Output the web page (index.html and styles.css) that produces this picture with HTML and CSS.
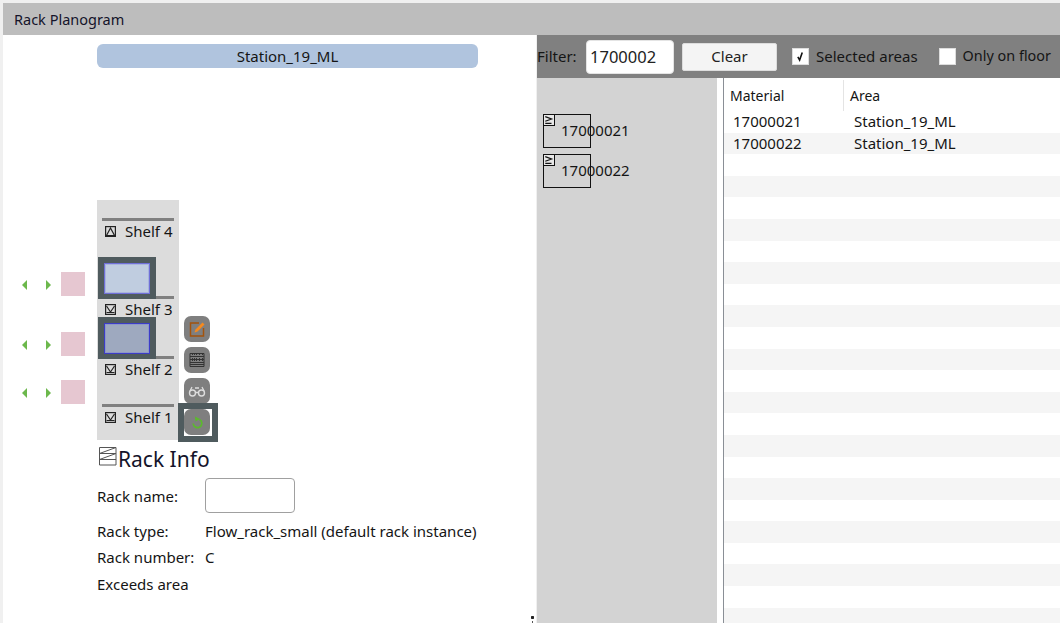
FILE: index.html
```html
<!DOCTYPE html>
<html lang="en">
<head>
<meta charset="utf-8">
<title>Rack Planogram</title>
<link rel="stylesheet" href="styles.css">
</head>
<body>
<div class="app">
  <header class="title">Rack Planogram</header>
  <div class="main">
    <section class="left">
      <div class="station">Station_19_ML</div>
      <div class="canvas">
        <div class="rack"></div>
        <div class="line l4"></div><div class="line l3"></div><div class="line l2"></div><div class="line l1"></div>
        <div class="shelf s4"><svg class="chk" viewBox="0 0 11 11"><rect x=".6" y=".6" width="9.800" height="9.800"/><path d="M1.500 9.500 5.500 2l4 7.500z"/></svg>Shelf 4</div>
        <div class="shelf s3"><svg class="chk" viewBox="0 0 11 11"><rect x=".6" y=".6" width="9.800" height="9.800"/><path d="M1.500 2 5.500 8l4-6M1.500 8.500h8"/></svg>Shelf 3</div>
        <div class="shelf s2"><svg class="chk" viewBox="0 0 11 11"><rect x=".6" y=".6" width="9.800" height="9.800"/><path d="M1.500 2 5.500 8l4-6M1.500 8.500h8"/></svg>Shelf 2</div>
        <div class="shelf s1"><svg class="chk" viewBox="0 0 11 11"><rect x=".6" y=".6" width="9.800" height="9.800"/><path d="M1.500 2 5.500 8l4-6M1.500 8.500h8"/></svg>Shelf 1</div>
        <div class="sel sel-a"><div class="bin bin-a"></div></div>
        <div class="sel sel-b"><div class="bin bin-b"></div></div>

        <div class="ctl c1"><i class="al"></i><i class="ar"></i><b class="pink"></b></div>
        <div class="ctl c2"><i class="al"></i><i class="ar"></i><b class="pink"></b></div>
        <div class="ctl c3"><i class="al"></i><i class="ar"></i><b class="pink"></b></div>

        <div class="tool t1"><svg viewBox="0 0 26 26" width="26" height="26"><path d="M15 7H6.500v13h13v-8" fill="none" stroke="#a3530c" stroke-width="1.500"/><path d="M10.500 16.500l1-3 7-7 2 2-7 7z" fill="#f58a1f"/></svg></div>
        <div class="tool t2"><svg viewBox="0 0 26 26" width="26" height="26"><path d="M6 6.500h14v13H6zM6 9.500h14M6 12.500h14M6 15.500h14M6 17.500h14" stroke="#333" fill="none"/><path d="M8.500 7v12M10.500 7v12M12.500 7v12M15.500 7v12M18.500 7v12" stroke="#333" fill="none" stroke-dasharray="1 1"/></svg></div>
        <div class="tool t3"><svg viewBox="0 0 26 26" width="26" height="26"><circle cx="8.500" cy="15" r="3" fill="none" stroke="#ddd" stroke-width="1.400"/><circle cx="17.500" cy="15" r="3" fill="none" stroke="#ddd" stroke-width="1.400"/><path d="M11.500 14.500h3M6 13l2-4M20 13l-2-4M11 10h4" stroke="#ddd" stroke-width="1.300" fill="none"/></svg></div>
        <div class="tool-sel"><div class="tool-white"><div class="tool t4"><svg viewBox="0 0 26 26" width="26" height="26"><path d="M15.500 10.500a4.300 4.300 0 1 1-6.300 4" fill="none" stroke="#5cb82e" stroke-width="1.800"/><path d="M11 7.500l5 2.500-4.500 2.500z" fill="#5cb82e"/></svg></div></div></div>
      </div>
      <div class="info">
        <h2 class="info-title"><svg class="info-ic" viewBox="0 0 18 19"><path d="M.5 .5h16.500v17.500H.5zM.5 6.500h16.500M.5 12.500h16.500M.5 6.500l16.500-6M.5 12.500l16.500-6" fill="none" stroke="#555"/></svg>Rack Info</h2>
        <div class="field f-name"><span class="lab">Rack name:</span><input class="name-in" type="text"></div>
        <div class="field f-type"><span class="lab">Rack type:</span><span>Flow_rack_small (default rack instance)</span></div>
        <div class="field f-num"><span class="lab">Rack number:</span><span>C</span></div>
        <div class="field f-ex"><span class="lab">Exceeds area</span></div>
      </div>
      <span class="grip"></span>
    </section>
    <section class="right">
      <div class="filter">
        <label class="flt">Filter:</label>
        <input class="flt-in" type="text" value="1700002">
        <button class="clear" type="button">Clear</button>
        <span class="cb on"><svg viewBox="0 0 17 17" width="15" height="15"><path d="M5.500 9l2 3.500L10.500 4" fill="none" stroke="#111" stroke-width="1.800"/></svg></span><span class="cb-l">Selected areas</span>
        <span class="cb"></span><span class="cb-l floor">Only on floor</span>
      </div>
      <div class="split">
        <div class="tree">
          <div class="node"><span class="arrow"><svg viewBox="0 0 12 10"><path d="M1.500 1 9 3.800 1.500 6.500M1.500 9H9" fill="none" stroke="#111" stroke-width="1.500"/></svg></span><span class="node-t">17000021</span></div>
          <div class="node"><span class="arrow"><svg viewBox="0 0 12 10"><path d="M1.500 1 9 3.800 1.500 6.500M1.500 9H9" fill="none" stroke="#111" stroke-width="1.500"/></svg></span><span class="node-t">17000022</span></div>
        </div>
        <div class="gutter"></div>
        <div class="table">
          <div class="thead"><div class="th th-m">Material</div><div class="th th-a">Area</div></div>
          <div class="row"><span class="td-m">17000021</span><span>Station_19_ML</span></div>
          <div class="row"><span class="td-m">17000022</span><span>Station_19_ML</span></div>
          <div class="row"></div><div class="row"></div><div class="row"></div><div class="row"></div>
          <div class="row"></div><div class="row"></div><div class="row"></div><div class="row"></div>
          <div class="row"></div><div class="row"></div><div class="row"></div><div class="row"></div>
          <div class="row"></div><div class="row"></div><div class="row"></div><div class="row"></div>
          <div class="row"></div><div class="row"></div><div class="row"></div><div class="row"></div>
          <div class="row"></div><div class="row"></div>
        </div>
      </div>
    </section>
  </div>
</div>
</body>
</html>
```
FILE: styles.css
```css
* { box-sizing: border-box; }
html, body { margin: 0; height: 100%; overflow: hidden; }
body { background: #f0f0f0; font-family: "Noto Sans", sans-serif; font-size: 15px; color: #151515; }
.app { width: 1060px; height: 623px; padding: 3px 0 0 3px; display: flex; flex-direction: column; }
.title { height: 32px; background: #bdbdbd; padding-left: 11px; line-height: 33px; flex: none; color: #14142a; font-size: 14.500px; }
.main { flex: 1; display: flex; min-height: 0; }
.left { width: 533px; flex: none; background: #fff; position: relative; padding-top: 9px; }
.station { margin-left: 94px; width: 381px; height: 24px; background: #b0c4de; border-radius: 6px; text-align: center; line-height: 25px; }
.canvas { position: relative; height: 372px; }
.canvas > * { position: absolute; }
.rack { left: 94px; top: 132px; width: 82px; height: 240px; background: #dcdcdc; }
.line { left: 99px; width: 72px; height: 3px; background: #808080; }
.l4 { top: 150px; } .l3 { top: 228px; } .l2 { top: 288px; } .l1 { top: 336px; }
.shelf { left: 102px; width: 74px; height: 20px; display: flex; align-items: center; line-height: 20px; white-space: nowrap; }
.s4 { top: 153px; } .s3 { top: 231px; } .s2 { top: 291px; } .s1 { top: 339px; }
.chk { width: 11px; height: 11px; margin-right: 9px; flex: none; fill: none; stroke: #222; stroke-width: 1.200; }
.sel { left: 95px; width: 58px; height: 42px; background: #4f5b5e; padding: 6px; }
.sel-a { top: 189px; } .sel-b { top: 249px; }
.bin { width: 46px; height: 31px; border: 1px solid #6f6fd8; }
.bin-a { background: #c0cde0; outline: 1px solid #a9b4dc; outline-offset: -2px; }
.bin-b { background: #9ea9bf; border-color: #3c3cc8; outline: 1px solid #8d97c8; outline-offset: -2px; }
.ctl { left: 18px; width: 64px; height: 24px; }
.c1 { top: 204px; } .c2 { top: 264px; } .c3 { top: 312px; }
.ctl i { position: absolute; top: 8px; width: 0; height: 0; border-top: 5px solid transparent; border-bottom: 5px solid transparent; }
.al { left: 1px; border-right: 5px solid #6cb84c; }
.ar { left: 25px; border-left: 5px solid #6cb84c; }
.pink { position: absolute; left: 40px; top: 0; width: 24px; height: 24px; background: #e6c7d1; }
.tool { width: 26px; height: 26px; border-radius: 7px; background: #7f7f7f; }
.tool svg { display: block; }
.t1 { left: 181px; top: 248px; } .t2 { left: 181px; top: 279px; } .t3 { left: 181px; top: 310px; }
.tool-sel { left: 175px; top: 335px; width: 40px; height: 39px; background: #4f5b5e; padding: 6px; }
.tool-white { width: 28px; height: 27px; background: #fff; }
.info { padding-left: 94px; }
.info-title { margin: 0; font-size: 21px; font-weight: 400; height: 38px; line-height: 40px; display: flex; align-items: center; color: #14142a; }
.info-ic { width: 18px; height: 19px; margin: -6px 1px 0 2px; flex: none; }
.field { display: flex; align-items: center; height: 26px; }
.lab { width: 108px; flex: none; }
.f-name { height: 35px; margin-bottom: 5px; }
.f-name .lab { padding-top: 1px; }
.f-ex { height: 28px; }
.name-in { width: 90px; height: 35px; border: 1px solid #a0a0a0; border-radius: 4px; background: #fff; }
.grip { position: absolute; left: 528px; bottom: 0; width: 3px; height: 7px; background: radial-gradient(circle at 1.500px 1.500px, #222 1.400px, transparent 1.500px), linear-gradient(#555, #555) 1px 5px / 1px 2px no-repeat; }
.right { flex: 1; display: flex; flex-direction: column; margin-left: 1px; min-width: 0; }
.filter { height: 43px; background: #808080; display: flex; align-items: center; flex: none; line-height: 20px; padding-bottom: 2px; }
.flt { width: 49px; }
.flt-in { width: 88px; height: 34px; border: 1px solid #e4e4e4; border-radius: 4px; padding: 0 3px; font: 16.500px "Noto Sans", sans-serif; color: #222; background: #fff; margin-top: 2px; }
.clear { width: 95px; height: 28px; margin-left: 8px; margin-top: 2px; background: #f4f4f4; border: 1px solid #ddd; border-radius: 2px; font: 15px "Noto Sans", sans-serif; line-height: 24px; color: #222; padding: 0 0 2px; }
.cb { width: 17px; height: 17px; margin-top: 2px; background: #fff; border: 1px solid #ddd; display: flex; align-items: center; justify-content: center; flex: none; margin-left: 15px; }
.cb-l { margin-left: 7px; white-space: nowrap; }
.cb-l + .cb { margin-left: 21px; }
.floor { font-size: 14.400px; }
.split { flex: 1; display: flex; min-height: 0; background: #fff; }
.tree { width: 180px; flex: none; background: #d3d3d3; padding: 36px 0 0 6px; }
.node { position: relative; width: 48px; height: 34px; border: 1px solid #111; margin-bottom: 6px; }
.arrow { position: absolute; left: -1px; top: -1px; width: 12px; height: 12px; border: 1px solid #111; background: #e8e8e8; display: block; }
.arrow svg { display: block; width: 10px; height: 10px; }
.node-t { position: absolute; left: 17px; top: 5px; white-space: nowrap; line-height: 20px; }
.gutter { width: 7px; flex: none; border-right: 1px solid #8a8f96; }
.table { flex: 1; min-width: 0; }
.thead { height: 33px; display: flex; font-size: 14px; }
.th { height: 31px; margin-top: 2px; line-height: 31px; }
.th-m { width: 120px; padding-left: 6px; border-right: 1px solid #e4e4e4; }
.th-a { padding-left: 6px; }
.row { height: 21.600px; line-height: 21px; display: flex; }
.row:nth-child(odd) { background: #f5f5f5; }
.td-m { width: 120px; padding-left: 9px; }
.row span:last-child { padding-left: 10px; }
```
